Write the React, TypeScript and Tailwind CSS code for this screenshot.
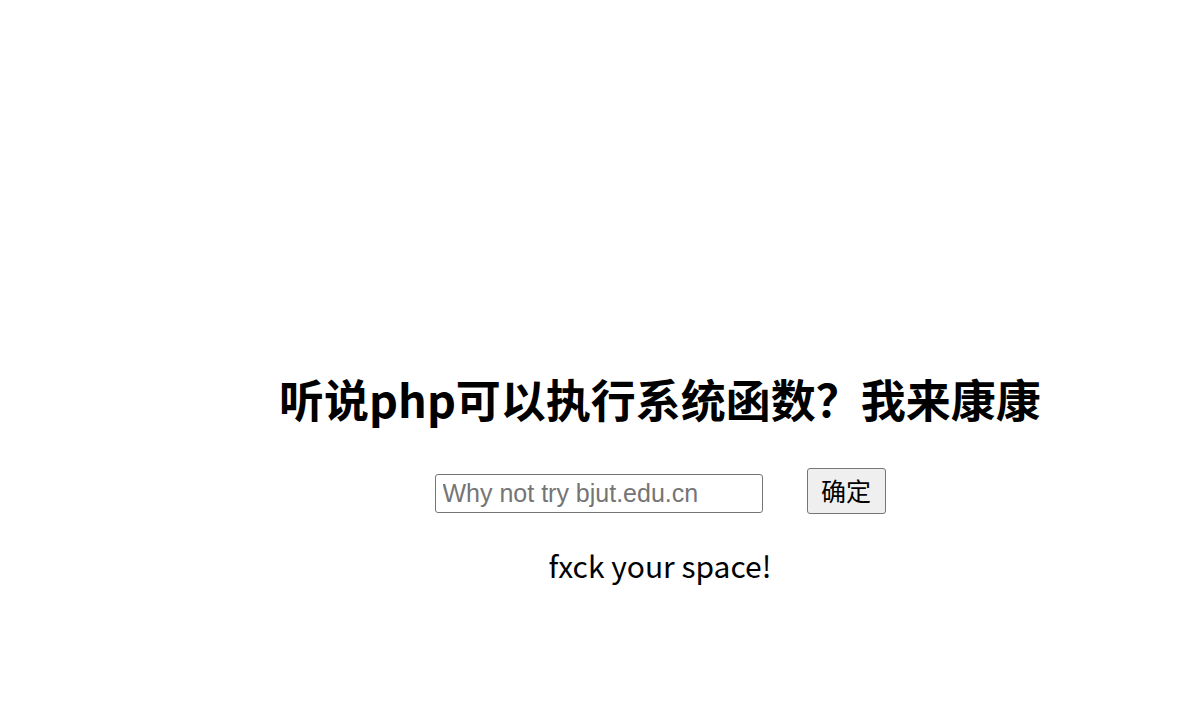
export default function App() {
  return (
    <div className="min-h-[702px] w-full bg-white pl-[125px] pt-[367px]">
      <div className="flex flex-col items-center">
        {/* title */}
        <h1 className="font-['Noto_Sans_CJK_SC','Noto_Sans',sans-serif] text-[45px] font-bold leading-[64px] text-black">
          听说php可以执行系统函数？我来康康
        </h1>
        <form className="mt-[37px] flex items-end gap-[44px]" onSubmit={(e) => e.preventDefault()}>
          <input
            type="text"
            placeholder="Why not try bjut.edu.cn"
            className="mb-[1px] h-[39px] w-[328px] rounded-[3px] border border-[#767676] px-[7px] font-['Liberation_Sans',Arial,sans-serif] text-[25px] text-black outline-none placeholder:text-[#757575]"
          />
          <button
            type="submit"
            className="h-[46px] w-[79px] rounded-[3px] border border-[#767676] bg-[#efefef] font-['Noto_Sans_CJK_SC',sans-serif] text-[25px] text-black"
          >
            确定
          </button>
        </form>
        <p className="mt-[29px] font-['Noto_Sans_CJK_SC','Noto_Sans',sans-serif] text-[30px] leading-[44px] text-black">
          fxck your space!
        </p>
      </div>
    </div>
  );
}
